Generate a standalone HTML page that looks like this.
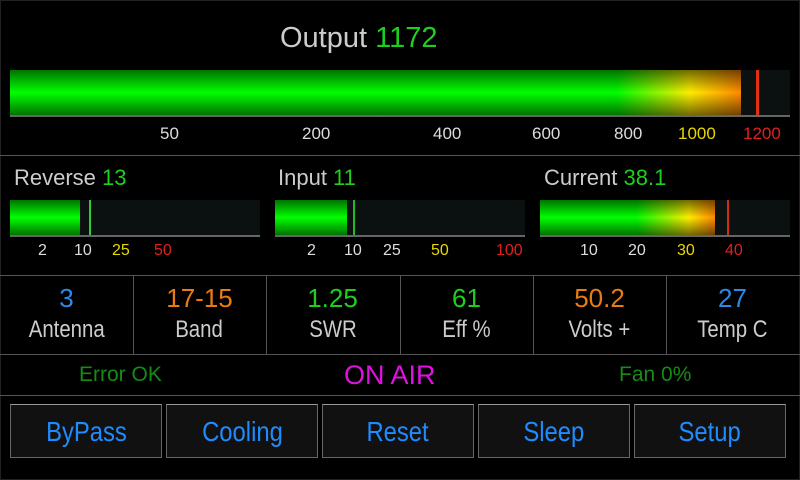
<!DOCTYPE html>
<html><head><meta charset="utf-8"><style>
*{margin:0;padding:0;box-sizing:border-box}
body{width:800px;height:480px;background:#000;position:relative;overflow:hidden;font-family:"Liberation Sans",sans-serif;color:#ccc}
.frame{position:absolute;left:0;top:0;width:800px;height:480px;border:1px solid #222}
.a{position:absolute;white-space:nowrap}
.track{position:absolute;background:#0a1110;border-bottom:2px solid #666}
.fill{position:absolute;left:0;top:0;bottom:0}
.hl{position:absolute;height:1px;background:#555}
.vl{position:absolute;width:1px;background:#555}
.lbl{font-size:22px;color:#ccc}
.g{color:#1ecf1e}
.sc{font-size:17px;top:0}
.w{color:#ddd}.y{color:#e6d800}.r{color:#e02020}
.cell{position:absolute;top:283px;width:133px;text-align:center}
.cell .v{font-size:26px;line-height:30px}
.cell .n{font-size:24px;line-height:34px;color:#ccc}
.cx{display:inline-block;transform:scaleX(.85)}
.btn{position:absolute;top:404px;width:152px;height:54px;background:#111;border:1px solid #666;border-top-color:#999;color:#1e8bff;font-size:28px;text-align:center;line-height:54px}
</style></head><body>
<div class="frame"></div>
<div class="a" style="left:280px;top:22px;font-size:29px;color:#ccc">Output <span class="g">1172</span></div>

<div class="track" style="left:10px;top:70px;width:780px;height:47px">
 <div class="fill" style="width:731px;background:linear-gradient(to bottom,rgba(0,0,0,.55),rgba(0,0,0,0) 50%,rgba(0,0,0,.55)),linear-gradient(to right,#00ff00 0%,#00ff00 83%,#ffee00 93%,#ff8800 100%)"></div>
 <div class="fill" style="left:746px;width:3px;background:#e03010"></div>
</div>
<div class="a sc w" style="left:160px;top:124px">50</div>
<div class="a sc w" style="left:302px;top:124px">200</div>
<div class="a sc w" style="left:433px;top:124px">400</div>
<div class="a sc w" style="left:532px;top:124px">600</div>
<div class="a sc w" style="left:614px;top:124px">800</div>
<div class="a sc y" style="left:678px;top:124px">1000</div>
<div class="a sc r" style="left:743px;top:124px">1200</div>
<div class="hl" style="left:0;top:155px;width:800px"></div>

<div class="a lbl" style="left:14px;top:165px">Reverse <span class="g">13</span></div>
<div class="a lbl" style="left:278px;top:165px">Input <span class="g">11</span></div>
<div class="a lbl" style="left:544px;top:165px">Current <span class="g">38.1</span></div>

<div class="track" style="left:10px;top:200px;width:250px;height:37px">
 <div class="fill" style="width:70px;background:linear-gradient(to bottom,rgba(0,0,0,.55),rgba(0,0,0,0) 50%,rgba(0,0,0,.55)),#00ff00"></div>
 <div class="fill" style="left:79px;width:2px;background:#3c3"></div>
</div>
<div class="track" style="left:275px;top:200px;width:250px;height:37px">
 <div class="fill" style="width:72px;background:linear-gradient(to bottom,rgba(0,0,0,.55),rgba(0,0,0,0) 50%,rgba(0,0,0,.55)),#00ff00"></div>
 <div class="fill" style="left:78px;width:2px;background:#2b2"></div>
</div>
<div class="track" style="left:540px;top:200px;width:250px;height:37px">
 <div class="fill" style="width:175px;background:linear-gradient(to bottom,rgba(0,0,0,.55),rgba(0,0,0,0) 50%,rgba(0,0,0,.55)),linear-gradient(to right,#00ff00 0%,#00ff00 55%,#ffee00 85%,#ff8800 100%)"></div>
 <div class="fill" style="left:187px;width:2px;background:#d03010"></div>
</div>
<div class="a sc w" style="left:38px;top:242px;font-size:16px">2</div>
<div class="a sc w" style="left:74px;top:242px;font-size:16px">10</div>
<div class="a sc y" style="left:112px;top:242px;font-size:16px">25</div>
<div class="a sc r" style="left:154px;top:242px;font-size:16px">50</div>
<div class="a sc w" style="left:307px;top:242px;font-size:16px">2</div>
<div class="a sc w" style="left:344px;top:242px;font-size:16px">10</div>
<div class="a sc w" style="left:383px;top:242px;font-size:16px">25</div>
<div class="a sc y" style="left:431px;top:242px;font-size:16px">50</div>
<div class="a sc r" style="left:496px;top:242px;font-size:16px">100</div>
<div class="a sc w" style="left:580px;top:242px;font-size:16px">10</div>
<div class="a sc w" style="left:628px;top:242px;font-size:16px">20</div>
<div class="a sc y" style="left:677px;top:242px;font-size:16px">30</div>
<div class="a sc r" style="left:725px;top:242px;font-size:16px">40</div>
<div class="hl" style="left:0;top:275px;width:800px"></div>

<div class="cell" style="left:0"><div class="v" style="color:#2a8ae8">3</div><div class="n"><span class="cx">Antenna</span></div></div>
<div class="cell" style="left:133px"><div class="v" style="color:#e87c10">17-15</div><div class="n"><span class="cx">Band</span></div></div>
<div class="cell" style="left:266px"><div class="v" style="color:#1ecf1e">1.25</div><div class="n"><span class="cx">SWR</span></div></div>
<div class="cell" style="left:400px"><div class="v" style="color:#1ecf1e">61</div><div class="n"><span class="cx">Eff %</span></div></div>
<div class="cell" style="left:533px"><div class="v" style="color:#e87c10">50.2</div><div class="n"><span class="cx">Volts +</span></div></div>
<div class="cell" style="left:666px"><div class="v" style="color:#2a8ae8">27</div><div class="n"><span class="cx">Temp C</span></div></div>
<div class="vl" style="left:133px;top:276px;height:78px"></div>
<div class="vl" style="left:266px;top:276px;height:78px"></div>
<div class="vl" style="left:400px;top:276px;height:78px"></div>
<div class="vl" style="left:533px;top:276px;height:78px"></div>
<div class="vl" style="left:666px;top:276px;height:78px"></div>
<div class="hl" style="left:0;top:354px;width:800px"></div>

<div class="a" style="left:79px;top:363px;font-size:21px;color:#188a18">Error OK</div>
<div class="a" style="left:344px;top:360px;font-size:27px;color:#e010e0">ON AIR</div>
<div class="a" style="left:619px;top:363px;font-size:21px;color:#188a18">Fan 0%</div>
<div class="hl" style="left:0;top:395px;width:800px"></div>

<div class="btn" style="left:10px"><span class="cx">ByPass</span></div>
<div class="btn" style="left:166px"><span class="cx">Cooling</span></div>
<div class="btn" style="left:322px"><span class="cx">Reset</span></div>
<div class="btn" style="left:478px"><span class="cx">Sleep</span></div>
<div class="btn" style="left:634px"><span class="cx">Setup</span></div>
</body></html>
